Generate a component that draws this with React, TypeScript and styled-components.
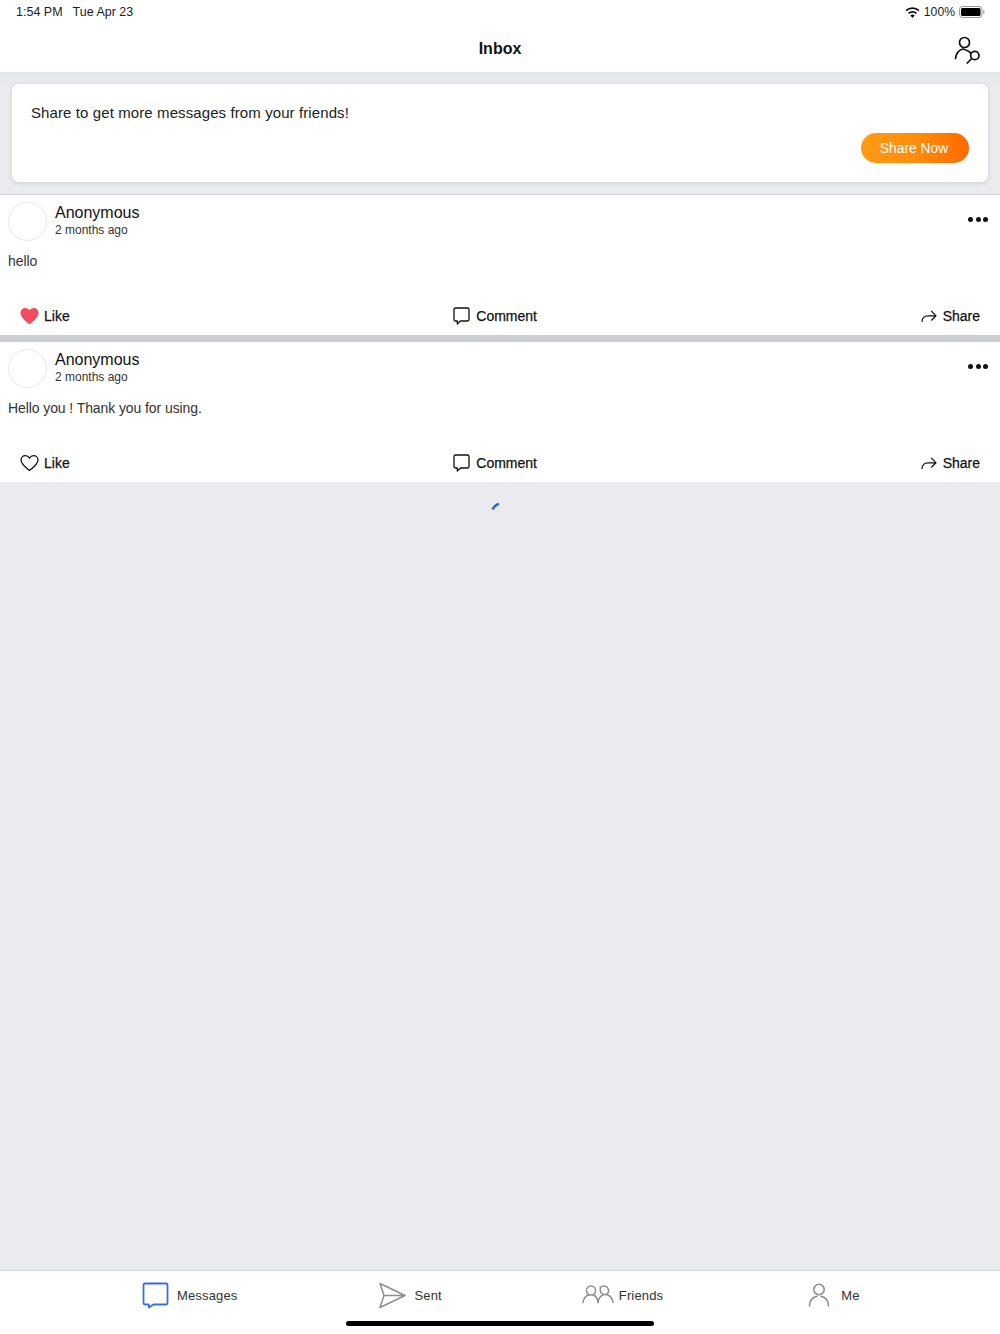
import * as React from "react";
import styled, { createGlobalStyle } from "styled-components";

const GlobalStyle = createGlobalStyle`
  html, body {
    margin: 0;
    padding: 0;
    background: #e9ebef;
    font-family: "Liberation Sans", Arial, sans-serif;
  }
`;

const Page = styled.div`
  width: 1000px;
  height: 1334px;
  display: flex;
  flex-direction: column;
  overflow: hidden;
  background: #e9ebef;
  color: #000;
`;

const TopArea = styled.header`
  height: 72px;
  flex: none;
  background: #fff;
  display: flex;
  flex-direction: column;
`;

const StatusBar = styled.div`
  height: 24px;
  padding: 0 15px 0 16px;
  display: flex;
  align-items: center;
  justify-content: space-between;
  font-size: 12.5px;
  color: #1c1c1c;
`;

const StatusGroup = styled.div`
  display: flex;
  align-items: center;
  gap: 10px;
`;

const StatusRight = styled.div`
  display: flex;
  align-items: center;
  gap: 4px;
  font-size: 12.2px;
`;

const NavBar = styled.div`
  flex: 1;
  display: flex;
  align-items: center;
  justify-content: center;
  position: relative;
  padding-top: 2px;
`;

const NavTitle = styled.h1`
  margin: 0;
  font-size: 16px;
  font-weight: 700;
  color: #111;
`;

const NavAction = styled.button`
  position: absolute;
  right: 18px;
  top: 12px;
  padding: 0;
  border: 0;
  background: none;
  display: block;
`;

const BannerArea = styled.section`
  flex: none;
  height: 123px;
  box-sizing: border-box;
  padding: 12px 12px;
  background: linear-gradient(#e4e6e9, #e9ebef 14px);
  border-bottom: 1px solid #d0d2d6;
`;

const BannerCard = styled.div`
  height: 98px;
  box-sizing: border-box;
  padding: 20px 19px 19px 19px;
  background: #fff;
  border-radius: 7px;
  box-shadow: 0 1px 5px rgba(0, 0, 0, 0.12);
  display: flex;
  flex-direction: column;
  justify-content: space-between;
`;

const BannerText = styled.div`
  font-size: 15px;
  line-height: 18px;
  color: #222;
  letter-spacing: 0.1px;
`;

const ShareNow = styled.button`
  align-self: flex-end;
  width: 108px;
  height: 30px;
  border: 0;
  border-radius: 15px;
  padding: 0 2px 0 0;
  color: #fff;
  font: 13.8px "Liberation Sans", Arial, sans-serif;
  background: linear-gradient(90deg, #ff9a14, #ff8d0c 50%, #ff6a00);
`;

const Post = styled.article`
  flex: none;
  height: 140px;
  box-sizing: border-box;
  background: #fff;
  padding: 7px 12px 0 8px;
  display: flex;
  flex-direction: column;
`;

const Separator = styled.div`
  flex: none;
  height: 7px;
  background: #ccd0d5;
`;

const PostHead = styled.div`
  display: flex;
  align-items: flex-start;
  gap: 8px;
`;

const Avatar = styled.div`
  width: 37px;
  height: 37px;
  flex: none;
  border: 1px solid #e9e9e9;
  border-radius: 50%;
  background: #fff;
`;

const Author = styled.div`
  flex: 1;
`;

const AuthorName = styled.div`
  font-size: 16px;
  line-height: 20px;
  margin-top: 1px;
  color: #111;
`;

const PostTime = styled.div`
  font-size: 12px;
  line-height: 14px;
  color: #333;
`;

const Dots = styled.div`
  display: flex;
  gap: 2.5px;
  margin-top: 15px;
`;

const Dot = styled.span`
  width: 5px;
  height: 5px;
  border-radius: 50%;
  background: #111;
`;

const PostBody = styled.p`
  margin: 11px 0 0;
  font-size: 14px;
  letter-spacing: -0.09px;
  line-height: 18px;
  color: #333;
  flex: 1;
`;

const Actions = styled.div`
  height: 24px;
  margin-bottom: 7px;
  padding: 0 8px 0 12px;
  display: flex;
  justify-content: space-between;
  align-items: center;
`;

const ActionButton = styled.div<{ $gap: number }>`
  display: flex;
  align-items: center;
  gap: ${(p) => p.$gap}px;
  font-size: 14px;
  font-weight: 500;
  color: #111;
  -webkit-text-stroke: 0.25px #111;
`;

const Spinner = styled.div`
  flex: 1;
  padding: 15px 0 0 490px;
`;

const TabBar = styled.nav`
  flex: none;
  height: 64px;
  box-sizing: border-box;
  position: relative;
  background: #fff;
  border-top: 1px solid #d6d8db;
  padding: 10px 0 0 142px;
  display: flex;
  align-items: flex-start;
  gap: 142px;
`;

const Tab = styled.div<{ $gap: number; $nudge?: number }>`
  display: flex;
  align-items: center;
  height: 28px;
  gap: ${(p) => p.$gap}px;
  margin-left: ${(p) => p.$nudge ?? 0}px;
  font-size: 13px;
  color: #333;
  letter-spacing: 0.15px;
`;

const HomeBar = styled.div`
  position: absolute;
  left: 346px;
  bottom: 8px;
  width: 308px;
  height: 5px;
  border-radius: 3px;
  background: #000;
`;

const HeartIcon = ({ filled }: { filled?: boolean }) => (
  <svg width="19" height="18" viewBox="0 0 19 18">
    <path
      d="M9.5 16.6C4.5 12.8 1 9.9 1 6.1 1 3.5 3 1.600 5.300 1.600c1.700 0 3.200.9 4.200 2.500 1-1.600 2.500-2.500 4.200-2.500C16 1.600 18 3.500 18 6.100c0 3.800-3.500 6.700-8.500 10.500z"
      fill={filled ? "#f54b5e" : "none"}
      stroke={filled ? "#f54b5e" : "#111"}
      strokeWidth="1.3"
      strokeLinejoin="round"
    />
  </svg>
);

const CommentIcon = () => (
  <svg width="17" height="18" viewBox="0 0 17 18">
    <path
      d="M2.5 1h12A1.500 1.500 0 0 1 16 2.500v10a1.500 1.500 0 0 1-1.500 1.500H7.500L4.300 17v-3H2.500A1.500 1.500 0 0 1 1 12.500v-10A1.500 1.500 0 0 1 2.500 1z"
      fill="none"
      stroke="#111"
      strokeWidth="1.3"
      strokeLinejoin="round"
    />
  </svg>
);

const ShareIcon = () => (
  <svg width="16" height="13" viewBox="0 0 16 13">
    <path
      d="M1 11.500C1 8 3.500 5.800 7 5.800H15M10.500 1.200 15 5.800 10.500 10.200"
      fill="none"
      stroke="#111"
      strokeWidth="1.200"
      strokeLinecap="round"
      strokeLinejoin="round"
    />
  </svg>
);

const WifiIcon = () => (
  <svg width="15" height="11" viewBox="0 0 15 11">
    <path d="M7.500 11 5.300 8.500a3.200 3.200 0 0 1 4.400 0z" fill="#111" />
    <path d="M3.500 6.400a5.800 5.800 0 0 1 8 0M1 3.700a9.400 9.400 0 0 1 13 0" fill="none" stroke="#111" strokeWidth="1.700" />
  </svg>
);

const BatteryIcon = () => (
  <svg width="26" height="12" viewBox="0 0 26 12">
    <rect x="0.500" y="0.500" width="22.500" height="11" rx="3" fill="none" stroke="#999" />
    <rect x="2" y="2" width="19.500" height="8" rx="1.500" fill="#000" />
    <path d="M24.300 4v4c.8-.3 1.200-1 1.200-2s-.4-1.700-1.200-2z" fill="#999" />
  </svg>
);

const FindUserIcon = () => (
  <svg width="28" height="28" viewBox="0 0 28 28" fill="none" stroke="#111" strokeWidth="1.700" strokeLinecap="round">
    <circle cx="10.500" cy="6.500" r="5" />
    <path d="M1.500 22.500c.6-5 3.500-8.500 7.500-9.500 3.500 1 6 2 7.500 4" />
    <circle cx="20.800" cy="19.500" r="4.200" />
    <path d="M17.700 22.500l-4.500 4.500" />
  </svg>
);

const MessagesIcon = () => (
  <svg width="27" height="27" viewBox="0 0 27 27">
    <path
      d="M3 1.500h21A1.500 1.500 0 0 1 25.500 3v18a1.500 1.500 0 0 1-1.500 1.500H11.500L6.800 25.500v-3H3A1.500 1.500 0 0 1 1.500 21V3A1.500 1.500 0 0 1 3 1.500z"
      fill="none"
      stroke="#3a6fd8"
      strokeWidth="1.800"
      strokeLinejoin="round"
    />
  </svg>
);

const SentIcon = () => (
  <svg width="27" height="27" viewBox="0 0 27 27">
    <path
      d="M1 1.500 26 13.500 1 25.500 5 13.500zM5 13.500H26"
      fill="none"
      stroke="#8e8e8e"
      strokeWidth="1.500"
      strokeLinejoin="round"
    />
  </svg>
);

const FriendsIcon = () => (
  <svg width="32" height="22" viewBox="0 0 32 22" fill="none" stroke="#8e8e8e" strokeWidth="1.500" strokeLinecap="round">
    <circle cx="9" cy="6.500" r="4.500" />
    <path d="M1 18.500c.5-4 3.200-7 6-7.800M11 10.700c2.500.8 4.500 3.500 5 7.800" />
    <path d="M18.300 3.200c2.500-2.300 7.200-1.500 8.200 2.500.6 2.500-1 4.500-3.200 5-3.400-.3-5.800-2-5-7.500z" />
    <path d="M16 18.500c.5-4 2.500-6.800 5.500-7.800M25 10.700c3 .8 5.500 3.500 6 7.800" />
  </svg>
);

const MeIcon = () => (
  <svg width="22" height="24" viewBox="0 0 22 24" fill="none" stroke="#8e8e8e" strokeWidth="1.600" strokeLinecap="round">
    <circle cx="11" cy="6.500" r="5.200" />
    <path d="M1.500 23c0-5 3-8.800 7.500-9.800M13 13.200c4.500 1 7.500 4.800 7.500 9.800" />
  </svg>
);

const PostCard = ({ text, liked }: { text: string; liked?: boolean }) => (
  <Post>
    <PostHead>
      <Avatar />
      <Author>
        <AuthorName>Anonymous</AuthorName>
        <PostTime>2 months ago</PostTime>
      </Author>
      <Dots>
        <Dot />
        <Dot />
        <Dot />
      </Dots>
    </PostHead>
    <PostBody>{text}</PostBody>
    <Actions>
      <ActionButton $gap={5}>
        <HeartIcon filled={liked} />
        Like
      </ActionButton>
      <ActionButton $gap={6}>
        <CommentIcon />
        Comment
      </ActionButton>
      <ActionButton $gap={6}>
        <ShareIcon />
        Share
      </ActionButton>
    </Actions>
  </Post>
);

export default function App() {
  return (
    <Page>
      <GlobalStyle />
      <TopArea>
        <StatusBar>
          <StatusGroup>
            <span>1:54 PM</span>
            <span>Tue Apr 23</span>
          </StatusGroup>
          <StatusRight>
            <WifiIcon />
            <span>100%</span>
            <BatteryIcon />
          </StatusRight>
        </StatusBar>
        <NavBar>
          <NavTitle>Inbox</NavTitle>
          <NavAction aria-label="Find friends">
            <FindUserIcon />
          </NavAction>
        </NavBar>
      </TopArea>
      <BannerArea>
        <BannerCard>
          <BannerText>Share to get more messages from your friends!</BannerText>
          <ShareNow>Share Now</ShareNow>
        </BannerCard>
      </BannerArea>
      <PostCard text="hello" liked />
      <Separator />
      <PostCard text="Hello you ! Thank you for using." />
      <Spinner>
        <svg width="12" height="10" viewBox="0 0 12 10">
          <path d="M3 7.500C4 5.800 5.500 4.500 8 3.200" fill="none" stroke="#2f62d8" strokeWidth="2.500" strokeLinecap="round" />
        </svg>
      </Spinner>
      <TabBar>
        <Tab $gap={8}>
          <MessagesIcon />
          Messages
        </Tab>
        <Tab $gap={8}>
          <SentIcon />
          Sent
        </Tab>
        <Tab $gap={5} $nudge={-2}>
          <FriendsIcon />
          Friends
        </Tab>
        <Tab $gap={11} $nudge={3}>
          <MeIcon />
          Me
        </Tab>
        <HomeBar />
      </TabBar>
    </Page>
  );
}
